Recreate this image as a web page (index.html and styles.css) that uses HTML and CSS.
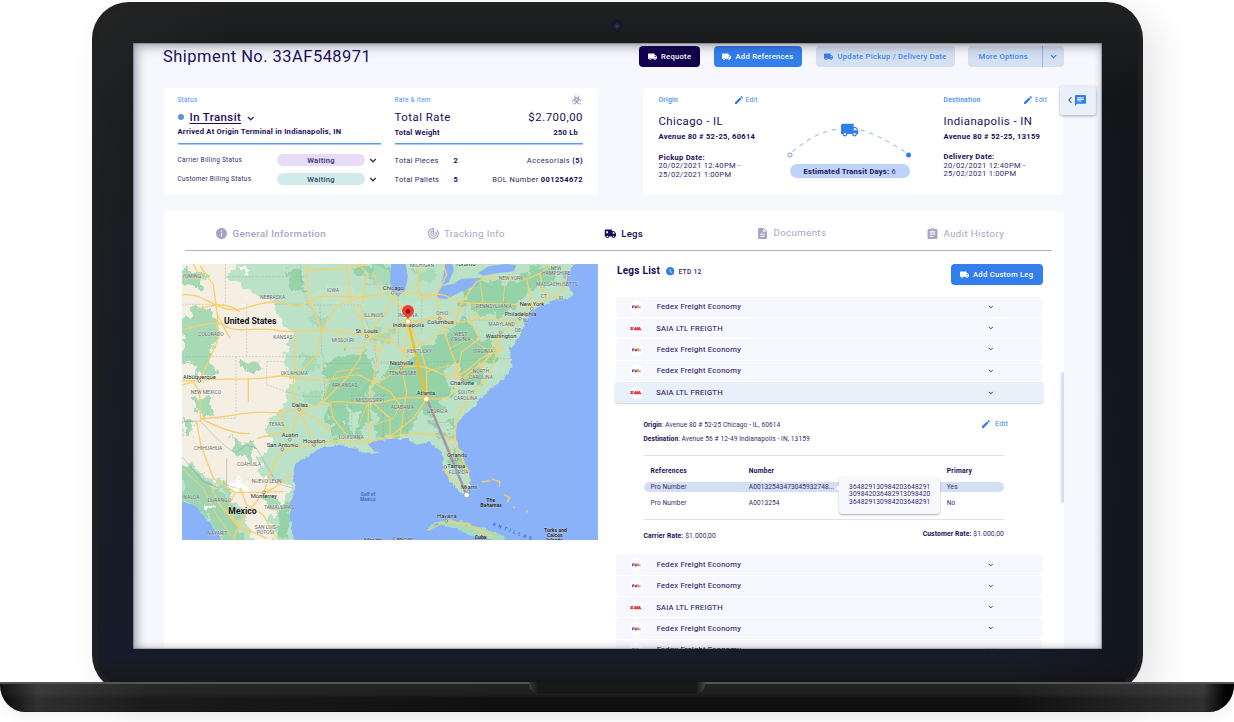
FILE: index.html
```html
<!DOCTYPE html>
<html lang="en">
<head>
<meta charset="utf-8">
<title>Shipment No. 33AF548971</title>
<link rel="stylesheet" href="styles.css">
</head>
<body>
<svg class="sprite" aria-hidden="true">
  <symbol id="truck" viewBox="1 3 22 18"><path d="M20 8h-3V4H3c-1.100 0-2 .9-2 2v11h2c0 1.660 1.340 3 3 3s3-1.340 3-3h6c0 1.660 1.340 3 3 3s3-1.340 3-3h2v-5l-3-4zM6 18.500c-.83 0-1.500-.67-1.500-1.500s.67-1.500 1.500-1.500 1.500.67 1.500 1.500-.67 1.500-1.500 1.500zm13.500-9l1.960 2.500H17V9.500h2.500zm-1.500 9c-.83 0-1.500-.67-1.500-1.500s.67-1.500 1.500-1.500 1.500.67 1.500 1.500-.67 1.500-1.500 1.500z"/></symbol>
  <symbol id="legs" viewBox="0 0 24 18"><path fill-rule="evenodd" d="M2 1h12a1.500 1.500 0 0 1 1.500 1.500V4h4l4 5v6h-2a3 3 0 0 1-6 0H9.500a3 3 0 0 1-6 0H1V2a1 1 0 0 1 1-1zM4 4.500v4h3.500v-4zM17 6v3.500h4.500L18.800 6zM6.500 13.500a1.500 1.500 0 1 0 0 3 1.500 1.500 0 0 0 0-3zm12 0a1.500 1.500 0 1 0 0 3 1.500 1.500 0 0 0 0-3z"/></symbol>
  <symbol id="chat" viewBox="2 2 20 20"><path d="M20 2H4c-1.100 0-1.990.9-1.990 2L2 22l4-4h14c1.100 0 2-.9 2-2V4c0-1.100-.9-2-2-2zM6 9h12v2H6V9zm8 5H6v-2h8v2zm4-6H6V6h12v2z"/></symbol>
  <symbol id="pencil" viewBox="3 3 18 18"><path d="M3 17.250V21h3.750L17.810 9.940l-3.750-3.750L3 17.250zM20.710 7.040c.39-.39.39-1.020 0-1.410l-2.340-2.340c-.39-.39-1.020-.39-1.410 0l-1.830 1.830 3.750 3.750 1.830-1.830z"/></symbol>
  <symbol id="info" viewBox="2 2 20 20"><path d="M12 2C6.480 2 2 6.480 2 12s4.480 10 10 10 10-4.480 10-10S17.520 2 12 2zm1 15h-2v-6h2v6zm0-8h-2V7h2v2z"/></symbol>
  <symbol id="track" viewBox="2 2 20 20"><path d="M19.070 4.930l-1.410 1.410C19.100 7.790 20 9.790 20 12c0 4.420-3.580 8-8 8s-8-3.580-8-8c0-4.080 3.050-7.440 7-7.930v2.020C8.160 6.570 6 9.030 6 12c0 3.310 2.690 6 6 6s6-2.690 6-6c0-1.660-.67-3.160-1.760-4.240l-1.410 1.410C15.550 9.900 16 10.900 16 12c0 2.210-1.790 4-4 4s-4-1.790-4-4c0-1.860 1.280-3.410 3-3.860v2.140c-.6.35-1 .98-1 1.720 0 1.100.9 2 2 2s2-.9 2-2c0-.74-.4-1.380-1-1.720V2h-1C6.480 2 2 6.480 2 12s4.480 10 10 10 10-4.480 10-10c0-2.760-1.120-5.260-2.930-7.070z"/></symbol>
  <symbol id="doc" viewBox="4 2 16 20"><path d="M14 2H6c-1.100 0-1.990.9-1.990 2L4 20c0 1.100.89 2 1.990 2H18c1.100 0 2-.9 2-2V8l-6-6zm2 16H8v-2h8v2zm0-4H8v-2h8v2zm-3-5V3.500L18.500 9H13z"/></symbol>
  <symbol id="audit" viewBox="3 1 18 20"><path d="M19 3h-4.180C14.400 1.840 13.300 1 12 1c-1.300 0-2.400.84-2.820 2H5c-1.100 0-2 .9-2 2v14c0 1.100.9 2 2 2h14c1.100 0 2-.9 2-2V5c0-1.100-.9-2-2-2zm-7 0c.55 0 1 .45 1 1s-.45 1-1 1-1-.45-1-1 .45-1 1-1zm2 14H7v-2h7v2zm3-4H7v-2h10v2zm0-4H7V7h10v2z"/></symbol>
  <symbol id="clock" viewBox="2 2 20 20"><path d="M12 2C6.500 2 2 6.500 2 12s4.500 10 10 10 10-4.500 10-10S17.500 2 12 2zm4.200 14.200L11 13V7h1.500v5.200l4.500 2.700-.8 1.300z"/></symbol>
  <symbol id="chev" viewBox="0 0 12 8"><path d="M1.500 1.500L6 6l4.500-4.500" fill="none" stroke="currentColor" stroke-width="2"/></symbol>
  <symbol id="hazard" viewBox="0 0 24 24"><g fill="none" stroke="currentColor" stroke-width="1.900"><path d="M8 1.500a5 5 0 1 0 8 0M1 17.500a5.200 5.200 0 0 1 10.300-2.500 5.200 5.200 0 0 1-4.800 6.800M23 17.500a5.200 5.200 0 0 0-10.300-2.500 5.200 5.200 0 0 0 4.800 6.800M1 22.800h7.500M15.500 22.800H23"/><circle cx="12" cy="12.500" r="5.800"/></g></symbol>
  <symbol id="fedex" viewBox="0 0 12 12"><circle cx="6" cy="6" r="6" fill="#fff"/><path d="M2 5h2.200v.7H2.900v.3h1v.6h-1v.9H2zM4.300 5.900h1.100V5h.8v2.500H4.400z" fill="#4b3394"/><path d="M6.500 5h1.800v2.500H6.500zM8.300 5.800l.8.500.7-.5.200.9-.2.800-.7-.4-.8.400z" fill="#f58a3a"/></symbol>
  <symbol id="saia" viewBox="0 0 12 12"><circle cx="6" cy="6" r="6" fill="#fff"/><path d="M.5 4.500h2.600l-.3 1H2l1 .8-.5 1.200H0l.2-.8h1.200L.3 5.800zM3 7.500l1.700-3h1l.2 1.800.9-1.800h.9l-.4 1.900 1.100-1.900h1l.5 2.200 1.900.9H8.600V7l-.6.5H5l-.5-.4-.4.400z" fill="#e9343a"/></symbol>
</svg>

<div class="laptop">
  <div class="lid">
    <i class="camera"></i>
    <main class="screen">
      <header class="top">
        <h1>Shipment No. 33AF548971</h1>
        <div class="btn dark"><svg><use href="#truck"/></svg>Requote</div>
        <div class="btn blue ref"><svg><use href="#truck"/></svg>Add References</div>
        <div class="btn pale upd"><svg><use href="#truck"/></svg>Update Pickup / Delivery Date</div>
        <div class="btn pale more"><span>More Options</span><b><svg class="chev"><use href="#chev"/></svg></b></div>
      </header>

      <section class="cards">
        <article class="card summary">
          <div class="col status">
            <div class="r1 cap">Status</div>
            <div class="r2"><i class="dot"></i><u>In Transit</u><svg class="chev"><use href="#chev"/></svg></div>
            <div class="r3 bold">Arrived At Origin Terminal in Indianapolis, IN</div>
            <div class="r4 small"><span>Carrier Billing Status</span><em class="pill lilac">Waiting</em><svg class="chev"><use href="#chev"/></svg></div>
            <div class="r5 small"><span>Customer Billing Status</span><em class="pill mint">Waiting</em><svg class="chev"><use href="#chev"/></svg></div>
          </div>
          <div class="col rate">
            <div class="r1 cap between"><span>Rate &amp; Item</span><svg class="haz"><use href="#hazard"/></svg></div>
            <div class="r2 between big"><span>Total Rate</span><span>$2.700,00</span></div>
            <div class="r3 between bold"><span>Total Weight</span><span class="lb">250 Lb</span></div>
            <div class="r4"><span class="k">Total Pieces</span><b>2</b><span class="end">Accesorials <b>(5)</b></span></div>
            <div class="r5"><span class="k">Total Pallets</span><b>5</b><span class="end">BOL Number <b>001254672</b></span></div>
          </div>
        </article>

        <article class="card route">
          <div class="place">
            <div class="pr1"><span class="cap m">Origin</span><span class="edit"><svg><use href="#pencil"/></svg>Edit</span></div>
            <div class="pr2">Chicago - IL</div>
            <div class="pr3 bold">Avenue 80 # 52-25, 60614</div>
            <p><b>Pickup Date:</b><br>20/02/2021 12:40PM -<br>25/02/2021 1:00PM</p>
          </div>
          <div class="trip">
            <svg class="arc" viewBox="0 0 124 38"><path d="M5.500 29.500Q30 9 52 7M74 8Q92 13 118 30" fill="none" stroke="#6a9fee" stroke-width=".9" stroke-dasharray="4 5"/><circle cx="3" cy="33" r="2.100" fill="#fff" stroke="#6a9fee"/><circle cx="121.500" cy="33" r="2.500" fill="#337eed"/><svg class="van" x="54" y="1" width="17.500" height="14.300"><use href="#truck"/></svg></svg>
            <div class="days"><b>Estimated Transit Days:</b>&nbsp;6</div>
          </div>
          <div class="place dest">
            <div class="pr1"><span class="cap m">Destination</span><span class="edit"><svg><use href="#pencil"/></svg>Edit</span></div>
            <div class="pr2">Indianapolis - IN</div>
            <div class="pr3 bold">Avenue 80 # 52-25, 13159</div>
            <p><b>Delivery Date:</b><br>20/02/2021 12:40PM -<br>25/02/2021 1:00PM</p>
          </div>
        </article>
        <div class="chat"><svg class="back" viewBox="0 0 4 8"><path d="M3.400 1L.8 4l2.600 3" fill="none" stroke="#2b2160"/></svg><svg class="bubble"><use href="#chat"/></svg></div>
      </section>

      <section class="panel">
        <nav class="tabs">
          <a class="t1"><svg><use href="#info"/></svg>General Information</a>
          <a class="t2"><svg><use href="#track"/></svg>Tracking Info</a>
          <a class="t3 on"><svg><use href="#legs"/></svg>Legs</a>
          <a class="t4"><svg><use href="#doc"/></svg>Documents</a>
          <a class="t5"><svg><use href="#audit"/></svg>Audit History</a>
        </nav>
        <div class="body">
          <svg class="map" viewBox="66 177 1248 828" preserveAspectRatio="none">
            <defs>
              <filter id="rough" x="-5%" y="-5%" width="110%" height="110%"><feTurbulence type="fractalNoise" baseFrequency=".035" numOctaves="4" seed="4"/><feDisplacementMap in="SourceGraphic" scale="55" xChannelSelector="R" yChannelSelector="G"/></filter>
              <filter id="coast" x="-2%" y="-2%" width="104%" height="104%"><feTurbulence type="fractalNoise" baseFrequency=".06" numOctaves="3" seed="9"/><feDisplacementMap in="SourceGraphic" scale="16" xChannelSelector="R" yChannelSelector="G"/></filter>
              <clipPath id="landclip"><path d="M40 150H1250L1235 195 1212 208 1220 240 1242 262 1225 280 1190 284 1150 298 1115 318 1095 350 1085 380 1066 410 1058 432 1046 420 1050 450 1058 485 1040 510 1010 540 965 575 950 600 905 632 890 660 885 705 905 745 925 795 932 845 918 875 895 855 872 830 850 795 850 765 838 735 805 710 770 720 745 700 690 702 640 708 625 720 655 740 620 746 590 732 540 720 480 730 450 748 410 772 400 810 406 850 388 895 390 955 408 1030H200L160 965 110 905 40 870Z"/></clipPath>
            </defs>
            <rect x="66" y="177" width="1248" height="828" fill="#8ab2f8"/>
            <g filter="url(#coast)">
              <path d="M40 150H1250L1235 195 1212 208 1220 240 1242 262 1225 280 1190 284 1150 298 1115 318 1095 350 1085 380 1066 410 1058 432 1046 420 1050 450 1058 485 1040 510 1010 540 965 575 950 600 905 632 890 660 885 705 905 745 925 795 932 845 918 875 895 855 872 830 850 795 850 765 838 735 805 710 770 720 745 700 690 702 640 708 625 720 655 740 620 746 590 732 540 720 480 730 450 748 410 772 400 810 406 850 388 895 390 955 408 1030H200L160 965 110 905 40 870Z" fill="#bbe2c6"/>
              <path d="M800 978l15-22 40-12 50 5 50 16 60 22 30 20-50-2-70-18-60-22-35-8-25 22z" fill="#abdab9"/>
            </g>
            <g clip-path="url(#landclip)">
              <g filter="url(#rough)">
                <path d="M40 150H250L205 215 280 262 345 295 350 335 395 380 375 430 380 490 395 530 375 590 362 612 335 645 320 690 335 720 300 755 300 800 355 830 395 860 370 900 330 945 350 980 330 1030H290L250 930 180 830 60 770Z" fill="#f4efe2"/>
                <path d="M66 340L130 300 175 345 180 400 150 440 165 500 120 520 90 470 66 480ZM66 195L140 210 125 250 66 240ZM100 590L150 570 160 620 130 640ZM66 640L100 650 90 700 66 700ZM215 700L280 720 270 760 225 750ZM180 820L220 850 200 880ZM250 470L300 480 290 500 245 495ZM310 860L360 880 350 920 315 905ZM210 900L240 910 230 940Z" fill="#a6d9b4"/>
                <path d="M60 775L150 830 220 900 260 1020H190L140 940 60 880Z" fill="#9ed5ae"/>
                <path d="M500 480L560 440 620 450 650 500 620 560 640 620 600 700 520 700 500 600ZM690 480L760 450 860 380 920 340 960 400 900 450 850 510 880 560 830 620 760 640 740 700 650 690 640 560ZM900 260L960 230 1060 230 1110 190 1200 180 1180 230 1100 260 1040 330 930 320ZM880 440L940 400 1010 420 1020 480 960 540 900 520ZM800 650L880 640 870 700 830 690ZM860 740L900 740 920 800 890 800ZM560 180L690 180 680 220 600 210ZM380 190L420 200 440 260 400 260ZM360 900L390 900 390 1000 350 1000Z" fill="#95d2a8"/>
                <path d="M560 610L600 620 590 680 565 670ZM830 650L870 650 870 690 840 680ZM450 270L520 240 600 260 620 320 520 310ZM700 290L800 290 830 340 740 350ZM950 470L1020 470 1030 500 970 530Z" fill="#bfe4c9"/>
                <path d="M640 190L690 200 685 240 640 230ZM450 330L490 340 500 370 455 370ZM760 190L830 200 820 230 770 230ZM430 440L480 460 470 500 430 490ZM420 560L480 550 490 590 440 600ZM640 360L700 380 690 410 640 400Z" fill="#a9dab7"/>
                <path d="M215 825L260 835 265 865 225 860ZM240 180L270 185 250 200ZM105 670L125 685 120 700ZM130 890L165 900 150 915ZM240 290L275 300 260 310Z" fill="#fff"/>
              </g>
            </g>
            <g fill="#8ab2f8" stroke="#78a3e8" stroke-width="1">
              <path d="M695 170L691 230 700 264 714 273 734 257 743 215 734 170ZM829 270L848 243 880 238 905 222 962 220 950 240 905 258 860 281 835 279ZM858 170L850 216 844 240 866 232 880 196 876 170ZM955 205L985 185 1040 177 1068 182 1060 198 1010 204 970 211Z"/>
            </g>
            <g class="borders">
              <path d="M196 177V298M66 298H196M196 215H440M345 298H440M260 298V455M66 455H480M228 455V640M320 470H380M320 470V540L380 560 440 575 495 575M130 640H228M480 300L485 450H490L495 590M440 300H600M420 177L425 230 445 300 480 340M490 475H700M504 606H575M504 606L515 680 510 710M575 560V670H620M617 238H692M715 270V430M785 270V390M640 470H870M670 570V700M735 560L745 690M600 570H880M835 330L870 400 880 440M915 255V345H1080M1035 230V300M850 470L1060 460M800 640L820 660H880M600 300L640 400 650 470 640 520 600 570"/>
              <path d="M66 650L120 648 180 710 225 745 260 720 290 730 330 800 350 835 400 850M200 760V840L230 850M66 755L130 830 180 850" class="solid"/>
            </g>
            <g class="roads">
              <path d="M66 270C120 262 150 300 200 312S290 288 345 292 410 315 450 288 560 280 610 275 680 266 700 262 790 270 830 268 870 285 905 292 1010 292 1115 302"/>
              <path d="M66 375C120 360 170 345 200 365S300 365 345 375 440 378 485 376 570 385 620 392 700 350 745 350 810 335 840 340 890 360 930 345 1000 350 1060 345"/>
              <path d="M66 527H118C180 517 240 527 300 520S360 510 400 517 480 530 530 520 590 500 625 525 690 500 725 490 790 480 830 500 900 520 940 480 1000 450 1035 430"/>
              <path d="M120 640C180 670 230 690 270 685M120 640C200 640 260 618 320 622S390 616 418 613 470 600 510 592 590 600 640 595 720 570 800 580 880 560 905 525 990 480 1020 400"/>
              <path d="M66 540L100 530 118 560 122 650M120 182L160 240 172 330 175 400 150 460 118 527M172 330L210 400M405 390L402 517 395 560 418 613 390 705 367 733 340 780 312 862 240 950 220 1005M418 613L462 718 520 708 580 706 625 712 690 695 765 685 830 690 883 705M367 733L462 718M418 613L480 650 510 680M360 612L375 680 290 700M265 520V590M100 177L125 220 60 215"/>
              <path d="M440 177L445 280 485 376 470 450 402 517M445 195L560 190 620 177M560 180L570 280M485 376L530 300 610 275 620 210 600 177M620 392L600 330 610 275M620 392L680 320 700 262M620 392L600 460 560 520 490 590M620 392L660 440 640 520 625 590 625 712M620 392L700 410 745 450M700 262L745 350 780 420 800 500 800 580M745 350L725 490 740 560 720 690M745 350L690 400 650 440M830 268L840 340 870 430 905 525M785 177L770 240 785 280 830 268M830 268L860 210 850 177M905 292L885 350 800 410 725 440"/>
              <path d="M905 292L950 230 1000 215 1100 222 1140 205 1180 177M1100 222L1115 302 1080 345 1020 385 990 440 960 500 905 525M1140 205L1150 260 1190 280 1220 220 1215 190M1115 302L1160 280M930 345L960 400 905 440 890 520M1020 385L1010 450 980 520 930 570 890 640 883 705 910 770 930 830M800 580L830 640 850 700 885 760 930 800M850 790L880 830 930 850M800 580L760 640 690 695M625 525L690 560 720 600M640 595L690 640 690 695M510 592L520 640 560 690M400 810L340 850 312 862 225 862 160 820 122 720 110 650M225 862L200 920 260 980M312 862L370 860M150 840L180 900 230 960 320 1000M240 850L260 900 310 930 350 1000M120 310C160 300 200 290 240 320"/>
              <path d="M490 590L505 540 530 500 600 490M530 376L560 430 620 430M570 280L590 330 640 340 680 320M640 200L660 260M840 340L900 310 960 300M960 230L970 300 930 345M1035 230L1030 290M870 430L930 400 990 440M800 500L870 480 905 525M745 450L725 490M625 590L600 650M720 600L700 640 640 660M883 705L850 690M66 790L130 850 170 930 220 1000" class="minor"/>
              <path d="M965 830L990 828M995 822L1020 830 1018 845M1032 868L1048 878 1042 892M1060 905l5 5M1100 915l2 8M805 975L860 948 920 958 1000 995"/>
            </g>
            <path d="M744 350L799 582" stroke="#fbbc10" stroke-width="7"/>
            <path d="M801 582L920 870" stroke="#9a93b5" stroke-width="7"/>
            <g class="st">
              <text x="66" y="220">YOMING</text><text x="300" y="282">NEBRASKA</text><text x="500" y="262">IOWA</text><text x="750" y="186">MICHIGAN</text><text x="1016" y="224">NEW YORK</text><text x="1172" y="195">NEW</text><text x="1146" y="211">HAMPSHIRE</text><text x="1128" y="244">MASSACHUSETTS</text><text x="1142" y="278">CT</text><text x="1196" y="284">RI</text><text x="948" y="308">PENNSYLVANIA</text><text x="612" y="335">ILLINOIS</text><text x="714" y="335">INDIANA</text><text x="829" y="331">OHIO</text><text x="1089" y="352">NJ</text><text x="985" y="362">MARYLAND</text><text x="1065" y="382">DE</text><text x="114" y="393">COLORADO</text><text x="340" y="402">KANSAS</text><text x="515" y="410">MISSOURI</text><text x="882" y="393">WEST</text><text x="870" y="409">VIRGINIA</text><text x="938" y="445">VIRGINIA</text><text x="741" y="444">KENTUCKY</text><text x="687" y="509">TENNESSEE</text><text x="362" y="509">OKLAHOMA</text><text x="515" y="546">ARKANSAS</text><text x="938" y="505">NORTH</text><text x="927" y="521">CAROLINA</text><text x="92" y="568">NEW MEXICO</text><text x="893" y="568">SOUTH</text><text x="881" y="584">CAROLINA</text><text x="588" y="590">MISSISSIPPI</text><text x="692" y="612">ALABAMA</text><text x="801" y="623">GEORGIA</text><text x="326" y="662">TEXAS</text><text x="536" y="703">LOUISIANA</text><text x="102" y="734">CHIHUAHUA</text><text x="231" y="784">COAHUILA</text><text x="275" y="834">NUEVO LEON</text><text x="66" y="882">INALOA</text><text x="143" y="890">DURANGO</text><text x="312" y="913">TAMAULIPAS</text><text x="284" y="973">SAN LUIS</text><text x="290" y="988">POTOSI</text><text x="142" y="990">NAYARIT</text><text x="866" y="806">FLORIDA</text>
            </g>
            <g class="pts"><circle cx="698" cy="263" r="4"/><circle cx="620" cy="394" r="4"/><circle cx="839" cy="341" r="4"/><circle cx="1080" cy="341" r="4"/><circle cx="1115" cy="311" r="4"/><circle cx="1022" cy="382" r="4"/><circle cx="724" cy="488" r="4"/><circle cx="907" cy="524" r="4"/><circle cx="118" cy="528" r="4"/><circle cx="418" cy="613" r="4"/><circle cx="389" cy="704" r="4"/><circle cx="367" cy="733" r="4"/><circle cx="462" cy="720" r="4"/><circle cx="889" cy="763" r="4"/><circle cx="856" cy="786" r="4"/><circle cx="312" cy="862" r="4"/><circle cx="925" cy="860" r="4"/><circle cx="859" cy="948" r="4"/></g>
            <g class="city">
              <text x="668" y="255">Chicago</text><text x="886" y="183">Toronto</text><text x="698" y="365">Indianapolis</text><text x="802" y="357">Columbus</text><text x="587" y="385">St. Louis</text><text x="1079" y="303">New York</text><text x="1034" y="333">Philadelphia</text><text x="977" y="399">Washington</text><text x="689" y="480">Nashville</text><text x="871" y="540">Charlotte</text><text x="69" y="522">Albuquerque</text><text x="396" y="605">Dallas</text><text x="770" y="570">Atlanta</text><text x="365" y="695">Austin</text><text x="320" y="725">San Antonio</text><text x="429" y="714">Houston</text><text x="861" y="757">Orlando</text><text x="862" y="789">Tampa</text><text x="903" y="852">Miami</text><text x="272" y="879">Monterrey</text><text x="831" y="940">Havana</text><text x="612" y="1010">Mérida</text><text x="698" y="1007">Cancun</text>
            </g>
            <g class="country"><text x="192" y="356">United States</text><text x="205" y="927">Mexico</text></g>
            <g class="isle"><text x="979" y="892">The</text><text x="961" y="907">Bahamas</text><text x="944" y="1003">Cuba</text><text x="1152" y="980">Turks and</text><text x="1161" y="996">Caicos</text><text x="1159" y="1011">Islands</text></g>
            <g class="sea"><text x="602" y="872">Gulf of</text><text x="600" y="887">Mexico</text><text transform="translate(997 961) rotate(21)" textLength="124">ANTILLAS</text></g>
            <path d="M744 345C742 333 726 330 726 318a18 18 0 0 1 36 0C762 330 746 333 744 345Z" fill="#ea4335"/><circle cx="744" cy="319" r="7" fill="#a50e0e"/>
            <circle cx="744" cy="350" r="8.500" fill="#fff" stroke="#fbbc10" stroke-width="3"/><circle cx="799" cy="582" r="8.500" fill="#fff" stroke="#fbbc10" stroke-width="3"/><circle cx="920" cy="870" r="8.500" fill="#fff" stroke="#9a93b5" stroke-width="2.500"/>
          </svg>

          <div class="legs">
            <div class="lhead"><h2>Legs List</h2><svg><use href="#clock"/></svg><span>ETD 12</span><div class="btn blue leg"><svg><use href="#truck"/></svg>Add Custom Leg</div></div>
            <div class="row"><svg><use href="#fedex"/></svg><span>Fedex Freight Economy</span><svg class="chev"><use href="#chev"/></svg></div>
            <div class="row s"><svg><use href="#saia"/></svg><span>SAIA LTL FREIGTH</span><svg class="chev"><use href="#chev"/></svg></div>
            <div class="row"><svg><use href="#fedex"/></svg><span>Fedex Freight Economy</span><svg class="chev"><use href="#chev"/></svg></div>
            <div class="row"><svg><use href="#fedex"/></svg><span>Fedex Freight Economy</span><svg class="chev"><use href="#chev"/></svg></div>
            <div class="row s open"><svg><use href="#saia"/></svg><span>SAIA LTL FREIGTH</span><svg class="chev"><use href="#chev"/></svg></div>
            <div class="detail">
              <div class="addr">
                <div><p><b>Origin</b>: Avenue 80 # 52-25 Chicago - IL, 60614</p><p><b>Destination</b>: Avenue 56 # 12-49 Indianapolis - IN, 13159</p></div>
                <span class="edit lg"><svg><use href="#pencil"/></svg>Edit</span>
              </div>
              <div class="table">
                <div class="tr th"><span>References</span><span>Number</span><span>Primary</span></div>
                <div class="tr hl"><span>Pro Number</span><span>A00132543473045932748...</span><span>Yes</span>
                  <div class="tip">364829130984203648291<br>309842036482913098420<br>364829130984203648291</div></div>
                <div class="tr l2"><span>Pro Number</span><span>A0013254</span><span>No</span></div>
              </div>
              <div class="rates"><span><b>Carrier Rate:</b> $1.000,00</span><span class="cr"><b>Customer Rate:</b> $1.000,00</span></div>
            </div>
            <div class="row"><svg><use href="#fedex"/></svg><span>Fedex Freight Economy</span><svg class="chev"><use href="#chev"/></svg></div>
            <div class="row"><svg><use href="#fedex"/></svg><span>Fedex Freight Economy</span><svg class="chev"><use href="#chev"/></svg></div>
            <div class="row s"><svg><use href="#saia"/></svg><span>SAIA LTL FREIGTH</span><svg class="chev"><use href="#chev"/></svg></div>
            <div class="row"><svg><use href="#fedex"/></svg><span>Fedex Freight Economy</span><svg class="chev"><use href="#chev"/></svg></div>
            <div class="row"><svg><use href="#fedex"/></svg><span>Fedex Freight Economy</span><svg class="chev"><use href="#chev"/></svg></div>
          </div>
          <i class="scroll"></i>
        </div>
      </section>
    </main>
  </div>
  <div class="base"><i class="notch"></i></div>
</div>
</body>
</html>
```
FILE: styles.css
```css
* { box-sizing: border-box; }
body { margin: 0; width: 1234px; height: 722px; overflow: hidden; background: #fff; font-family: Roboto, "Liberation Sans", sans-serif; font-size: 7.5px; letter-spacing: .035em; color: #33276c; }
h1, h2, p { margin: 0; font-weight: 400; }
svg { display: block; flex: none; fill: currentColor; overflow: visible; }
.sprite { position: absolute; width: 0; height: 0; }
b, .bold { font-weight: 700; }
.bold, b { color: #1c0b57; }
.chev { width: 7px; height: 5px; }

/* Device frame */
.laptop { padding: 2px 0 0; }
.lid { position: relative; margin: 0 91px 0 92px; height: 690px; padding: 41px 41px 0; border-radius: 37px;
  background: linear-gradient(100deg, rgba(38,38,38,.75) 0, rgba(30,31,34,0) 12%, rgba(10,10,10,0) 88%, rgba(14,15,17,.5) 100%), linear-gradient(180deg, #1f2022 0, #131619 14%, #141a26 60%, #161c29 95%, #16171a 99%);
  box-shadow: inset 0 0 0 5px rgba(33,33,33,.75), 14px 12px 36px rgba(30,30,50,.11); }
.camera { position: absolute; left: 518px; top: 17px; width: 14px; height: 14px; border-radius: 50%; background: radial-gradient(circle, #2f4273 0, #1b2340 24%, #15181d 45%, #1b1e22 70%); }
.screen { position: relative; width: 969px; height: 606px; overflow: hidden; background: #f7f8fd; }
.screen::after { content: ""; position: absolute; inset: 0; box-shadow: inset 4px 4px 12px rgba(25,25,45,.3), inset 0 0 7px rgba(25,25,40,.28), inset 0 0 0 .6px rgba(60,60,70,.5); pointer-events: none; }
.base { position: relative; height: 30px; margin-top: -10px; border-radius: 0 0 25px 25px / 0 0 27px 27px; border-top: 2px solid #555;
  background: linear-gradient(90deg, rgba(0,0,0,.45) 0, rgba(100,100,100,.38) 3%, rgba(50,50,50,.3) 12%, rgba(0,0,0,0) 40%, rgba(0,0,0,0) 82%, rgba(95,95,95,.4) 97.500%, rgba(0,0,0,.9) 99.300%), linear-gradient(180deg, #242424 0, #1e1e1e 38%, #111 48%, #101010 96%, #000);
  box-shadow: 0 5px 12px rgba(0,0,0,.06); display: flex; justify-content: center; }
.notch { width: 176px; height: 12px; margin-top: -2px; border-radius: 0 0 9px 9px; background: linear-gradient(90deg, #3d3d3d 0, #181818 5%, #181818 95%, #444 100%); }

/* Header */
.top { display: flex; height: 45px; padding: 2.500px 0 0 30px; align-items: flex-start; }
h1 { width: 476px; font-size: 16.500px; letter-spacing: .028em; line-height: 22.500px; color: #20105e; }
.btn { display: flex; align-items: center; height: 21.500px; width: 61px; padding-left: 8.500px; border-radius: 4px; font-size: 7.650px; font-weight: 500; color: #fff; white-space: nowrap; }
.btn svg { width: 9px; height: 7.500px; margin-right: 4.500px; }
.dark { background: #12004f; }
.blue { background: #337eed; }
.pale { background: #d5e0f3; color: #4189ee; }
.ref { width: 88.500px; margin-left: 13.500px; }
.upd { width: 139.500px; margin-left: 13.500px; }
.upd svg { color: #337eed; }
.more { width: 95.500px; margin-left: 13px; padding: 0; }
.more span { flex: 1; padding-left: 10.500px; }
.more b { display: flex; width: 22px; height: 100%; border-left: 1px solid #8fb6f0; align-items: center; justify-content: center; color: #337eed; }
.more .chev { width: 7px; height: 5px; margin: 0; }

/* Summary cards */
.cards { position: relative; display: flex; padding-left: 30.500px; height: 122.500px; }
.card { display: flex; height: 106.500px; background: #fff; border-radius: 4px; }
.summary { width: 434px; padding: 6px 14px 0; }
.col > div { display: flex; align-items: center; white-space: nowrap; }
.status { width: 203px; margin-right: 14px; }
.rate { width: 188.500px; }
.col .between { justify-content: space-between; }
.col > .cap, .cap { color: #4a92fa; font-size: 6.500px; }
.cap.m { font-weight: 500; color: #4189f2; font-size: 6.700px; }
.r1 { height: 12px; }
.r2 { height: 22px; font-size: 11.400px; letter-spacing: .036em; }
.col.rate > .r2 { letter-spacing: .045em; }
.col > .r3 { height: 14.500px; padding-top: 1px; align-items: flex-start; line-height: 7px; box-shadow: 0 1.500px 0 #5b9bf7; }
.col.status > .r3 { padding-top: 0; font-size: 7.600px; }
.col .r4 { height: 19px; margin-top: 8px; }
.col .r5 { height: 19px; }
.dot { width: 6px; height: 6px; border-radius: 50%; background: #5b93d8; margin-right: 6px; }
.r2 u { font-weight: 500; color: #1c0b57; text-underline-offset: 1.500px; text-decoration-thickness: 1px; }
.r2 .chev { width: 7.500px; height: 5px; margin: 2px 0 0 5.500px; }
.small { font-size: 6.500px; }
.small span { width: 99.500px; }
.pill { display: flex; width: 88px; height: 12px; border-radius: 6px; align-items: center; justify-content: center; font-style: normal; font-weight: 500; font-size: 7.600px; }
.lilac { background: #e6dcf6; }
.mint { background: #d2ebea; color: #1f4a66; }
.small .chev { margin-left: 4px; width: 8px; }
.haz { width: 9.500px; height: 9.500px; color: #8a83ae; margin-right: 1.500px; }
.big { color: #1c0b57; }
.lb { margin-right: 5px; }
.k { width: 59px; }
.end { margin-left: auto; letter-spacing: .38px; }
.route { width: 420.500px; margin-left: 45px; padding: 6px 14px 0 16px; }
.place { width: 132px; line-height: 8.700px; white-space: nowrap; }
.pr1 { display: flex; align-items: center; height: 12px; }
.pr1 .cap { width: 76px; }
.edit { display: flex; align-items: center; color: #4189f2; font-size: 6.500px; }
.edit svg { width: 8px; height: 8px; margin-right: 3px; color: #337eed; }
.pr2 { height: 18px; margin-top: 6px; font-size: 11.400px; line-height: 18px; letter-spacing: .037em; color: #20105e; }
.pr3 { height: 12px; line-height: 12px; margin-top: 1px; font-size: 7.600px; letter-spacing: .035em; }
.place p { font-size: 7.600px; margin-top: 10.500px; }
.dest { width: 105px; }
.dest .cap { width: 80.500px; }
.dest p { margin-top: 10px; }
.trip { width: 153px; padding-top: 28px; }
.arc { width: 124px; height: 38px; margin-left: -3.500px; }
.van { color: #337eed; }
.days { display: flex; align-items: center; justify-content: center; width: 120.500px; height: 14px; margin: 4px 0 0 -1px; border-radius: 7px; background: #bed3fa; }
.chat { position: absolute; left: 927px; top: -2px; display: flex; align-items: center; width: 35.500px; height: 28.500px; border-radius: 2px; background: #e9f0f9; box-shadow: 0 1px 3px rgba(40,40,70,.4); padding-left: 8px; }
.back { width: 4px; height: 8px; }
.bubble { width: 11px; height: 11px; margin-left: 3px; color: #337eed; }

/* Tabs */
.panel { width: 900px; height: 460px; margin-left: 30.500px; background: #fff; border-radius: 4px; }
.tabs { display: flex; align-items: center; width: 866.500px; height: 40.500px; margin-left: 21.500px; padding: 7px 0 0 31px; border-bottom: 1px solid #b5b0cf; font-size: 9.700px; letter-spacing: .038em; color: #a9a3c6; }
.tabs a { display: flex; align-items: center; white-space: nowrap; }
.tabs svg { width: 11px; height: 11px; margin-right: 5.500px; }
.t1 { width: 211.500px; font-weight: 500; }
.t2 { width: 176.500px; }
.t3 { width: 153.500px; }
.tabs .t3 svg { width: 12.500px; height: 9px; margin-right: 4.800px; }
.tabs .on { color: #1c0b57; font-weight: 500; letter-spacing: .02em; }
.t4 { width: 169.500px; padding-bottom: 2px; }
.tabs .t4 svg { width: 9px; margin: 2px 7px 0 0; }
.body { display: flex; }
.map { width: 416px; height: 276px; margin: 13px 0 0 18.500px; overflow: hidden; }
.borders path { fill: none; stroke: #8b9a94; stroke-width: 1.500; stroke-dasharray: 6 4; opacity: .7; }
.borders .solid { stroke: #77777f; stroke-dasharray: none; }
.roads path { fill: none; stroke: #f8cf6b; stroke-width: 3.900; stroke-linejoin: round; }
.roads .minor { stroke-width: 2.800; }
.map text { letter-spacing: 0; stroke: rgba(255,255,255,.45); stroke-width: 2.500px; paint-order: stroke; stroke-linejoin: round; }
.st text { font-size: 15px; font-weight: 400; fill: #5f686c; }
.city text { font-size: 17.500px; font-weight: 400; fill: #22282c; }
.country text { font-size: 26px; font-weight: 700; fill: #111; }
.isle text { font-size: 15.500px; font-weight: 700; fill: #222; stroke-width: 2px; }
.sea text { font-size: 14.500px; font-weight: 500; fill: #2d68c4; stroke: none; }
.pts circle { fill: #fff; stroke: #5c6368; stroke-width: 2; }

/* Legs */
.legs { width: 428px; margin-left: 17.500px; padding-top: 12.500px; }
.lhead { display: flex; align-items: flex-start; height: 33.200px; padding-left: 1.500px; padding-right: 1px; }
h2 { width: 49px; font-size: 10px; font-weight: 700; line-height: 14px; color: #1c0b57; white-space: nowrap; }
.lhead > svg { width: 8.500px; height: 8.500px; margin-top: 3.500px; color: #337eed; }
.lhead span { font-size: 6.700px; font-weight: 500; line-height: 16px; margin-left: 4px; }
.leg { width: 91.500px; margin-left: auto; }
.row { display: flex; align-items: center; height: 20.300px; margin: 0 1.500px 1px 0; padding-left: 14.700px; border-radius: 3px; background: #f7f8fd; font-size: 7.600px; }
.row > svg { width: 13px; height: 13px; }
.row span { width: 345.300px; padding-left: 13.500px; letter-spacing: .035em; -webkit-text-stroke: .12px; }
.row.s span { padding-left: 13px; }
.row > .chev { width: 5.500px; height: 4px; }
.open { margin: 0 .5px 0 -1px; padding-left: 15.700px; height: 21.500px; background: #e8f0f9; box-shadow: 0 1px 2px rgba(60,60,90,.25); }
.detail { width: 360.500px; height: 151px; margin-left: 28px; padding-top: 14.500px; font-size: 6.550px; letter-spacing: .015em; white-space: nowrap; }
.addr { display: flex; justify-content: space-between; height: 37.200px; }
.addr p { line-height: 14px; }
.lg { height: 12px; margin-right: -4px; font-size: 7.500px; }
.lg svg { margin-right: 4.500px; }
.table { height: 64.500px; padding-top: 10px; border-top: 1px solid #dfdfee; border-bottom: 1px solid #dfdfee; }
.tr { position: relative; display: grid; grid-template-columns: 98.300px 198px 1fr; align-items: center; height: 10px; padding-left: 7px; border-radius: 5px; }
.th { font-weight: 700; color: #1c0b57; letter-spacing: .035em; font-size: 6.700px; }
.hl { background: #d3dff2; margin-top: 6px; }
.l2 { margin-top: 5.500px; }
.tip { position: absolute; left: 195px; top: -5px; width: 101px; height: 36.500px; padding: 6.500px 0 0 10.500px; border-radius: 4px; background: #f7f8fd; line-height: 7.600px; font-size: 6.700px; letter-spacing: .018em; box-shadow: 0 1px 2px rgba(50,50,80,.4); z-index: 1; }
.tip::before { content: ""; position: absolute; left: -4px; top: 7px; border: 4px solid transparent; border-left: 0; border-right: 5px solid #f7f8fd; }
.rates { display: flex; justify-content: space-between; padding-top: 12px; font-size: 6.800px; line-height: 8px; }
.cr { margin-top: -1.500px; }
.scroll { width: 3px; height: 131px; margin: 120.500px 0 0 17px; border-radius: 2px; background: #d3e1f4; }
```
